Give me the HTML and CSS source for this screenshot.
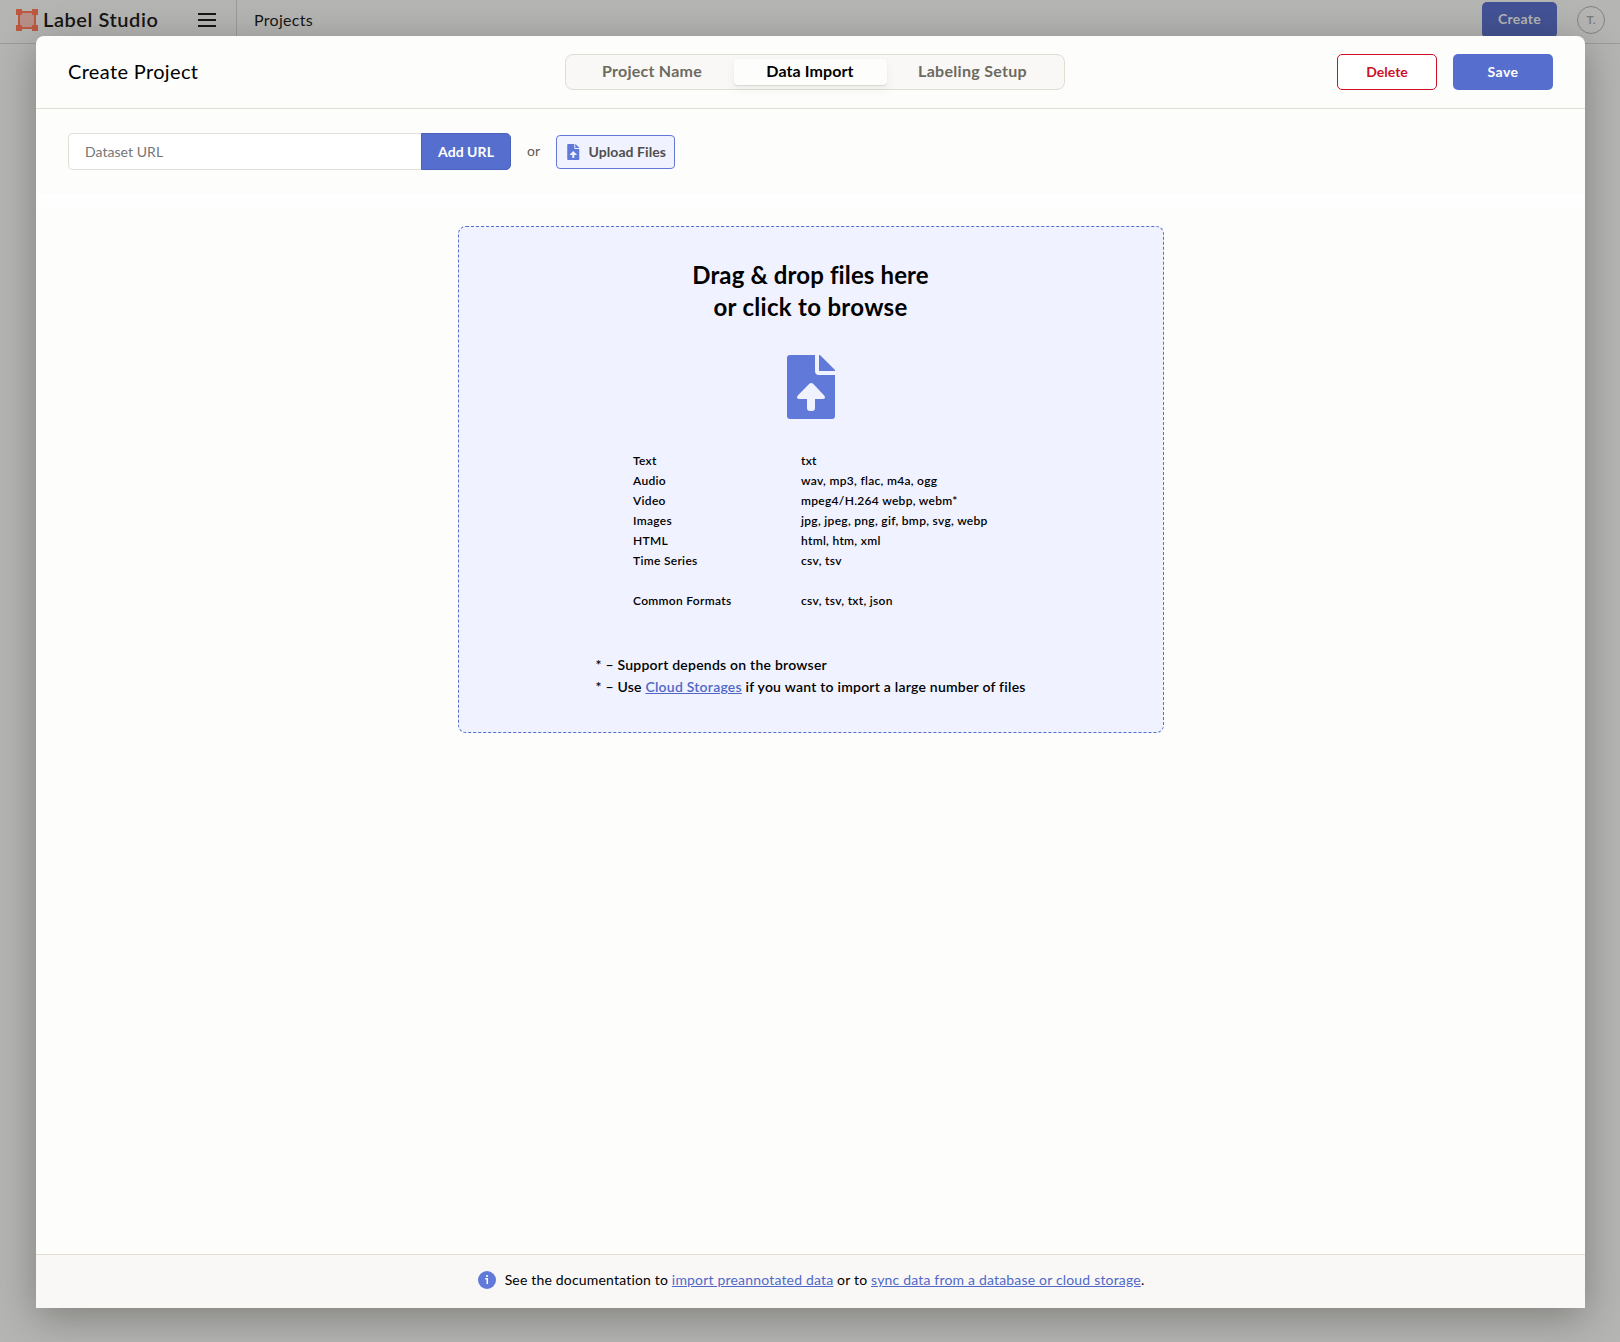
FILE: index.html
```
<!DOCTYPE html>
<html lang="en">
<head>
    <meta charset="utf-8">
    <title>Label Studio</title>
    <link rel="stylesheet" href="styles.css">
</head>
<body>
    <header class="menu-header">
        <div class="menu-left">
            <svg class="logo-icon" width="22" height="22" viewBox="0 0 22 22">
                <rect x="3" y="3" width="16" height="16" fill="#b79088"/>
                <path d="M3 3h16v16H3z" fill="none" stroke="#bd5841" stroke-width="2"/>
                <path d="M0 0h6v6H0zM16 0h6v6h-6zM0 16h6v6H0zM16 16h6v6h-6z" fill="#bd5841"/>
            </svg>
            <span class="logo-text">Label Studio</span>
            <div class="hamburger"><i></i><i></i><i></i></div>
        </div>
        <div class="breadcrumbs">Projects</div>
        <button class="button primary create">Create</button>
        <div class="userpic">T.</div>
    </header>

    <div class="overlay">
        <div class="modal">
            <div class="modal-header">
                <h1 class="modal-title">Create Project</h1>
                <ul class="tabs">
                    <li class="tab tab-name">Project Name</li>
                    <li class="tab active">Data Import</li>
                    <li class="tab tab-setup">Labeling Setup</li>
                </ul>
                <div class="actions">
                    <button class="button danger">Delete</button>
                    <button class="button primary save">Save</button>
                </div>
            </div>

            <div class="import-bar">
                <form class="url-form">
                    <input class="url-input" type="text" placeholder="Dataset URL">
                    <button class="url-button" type="button">Add URL</button>
                </form>
                <span class="or">or</span>
                <button class="upload-button">
                    <svg width="12.5" height="16" viewBox="0 0 48 64">
                        <path d="M3 0h25v16q0 4 4 4h16v41q0 3-3 3H3q-3 0-3-3V3q0-3 3-3z" fill="#617ada"/>
                        <path d="M32 0h1l15 15v1H32z" fill="#617ada"/>
                        <path d="M24 28L38 42v2H28v12h-8V44H10v-2z" fill="#f0f2ff"/>
                    </svg>
                    <span>Upload Files</span>
                </button>
            </div>

            <div class="import-body">
                <div class="dropzone">
                    <h2 class="dropzone-title">Drag &amp; drop files here<br><span class="browse">or click to browse</span></h2>
                    <svg class="file-icon" width="48" height="64" viewBox="0 0 48 64">
                        <path d="M3 0h25v16q0 4 4 4h16v41q0 3-3 3H3q-3 0-3-3V3q0-3 3-3z" fill="#617ada"/>
                        <path d="M32 0h1l15 15v1H32z" fill="#617ada"/>
                        <path d="M22.3 28.8q1.9-1.6 3.8 0L37.2 40.6q2.2 3.2-1.2 3.4H28v9q0 3-3 3h-2q-3 0-3-3v-9h-8q-3.4-.2-1.2-3.4z" fill="#f0f2ff"/>
                    </svg>
                    <dl class="formats">
                        <dt>Text</dt><dd>txt</dd>
                        <dt>Audio</dt><dd>wav, mp3, flac, m4a, ogg</dd>
                        <dt>Video</dt><dd>mpeg4/H.264 webp, webm*</dd>
                        <dt>Images</dt><dd>jpg, jpeg, png, gif, bmp, svg, webp</dd>
                        <dt>HTML</dt><dd>html, htm, xml</dd>
                        <dt>Time Series</dt><dd>csv, tsv</dd>
                        <dt class="common">Common Formats</dt><dd class="common">csv, tsv, txt, json</dd>
                    </dl>
                    <div class="notes">
                        * – Support depends on the browser<br>
                        * – Use <a href="#">Cloud Storages</a> if you want to import a large number of files
                    </div>
                </div>
            </div>

            <footer class="modal-footer">
                <svg class="info-icon" width="18" height="18" viewBox="0 0 18 18">
                    <circle cx="9" cy="9" r="9" fill="#617ada"/>
                    <circle cx="9" cy="5" r="1.1" fill="#fff"/>
                    <path d="M7.3 7.8h2v5.2" fill="none" stroke="#fff" stroke-width="1.5"/>
                </svg>
                <span>See the documentation to <a href="#">import preannotated data</a> or to <a href="#">sync data from a database or cloud storage</a>.</span>
            </footer>
        </div>
    </div>
</body>
</html>
```
FILE: styles.css
```
* {
    box-sizing: border-box;
}
body {
    margin: 0;
    height: 1342px;
    overflow: hidden;
    background: #b5b5b4;
    color: #000;
    font-family: Lato, "Liberation Sans", sans-serif;
    font-size: 14px;
    font-variant-ligatures: none;
}
h1, h2, ul, dl, dd {
    margin: 0;
    padding: 0;
}
button, input {
    font-family: inherit;
    font-size: 14px;
}
a {
    color: #5069c9;
    text-decoration: underline;
}

/* top menu */
.menu-header {
    display: flex;
    align-items: center;
    height: 44px;
    padding: 0 15px 4px 16px;
    border-bottom: 1px solid #9c9c97;
}
.menu-left {
    display: flex;
    align-items: center;
    align-self: stretch;
    width: 221px;
    margin-bottom: -4px;
    padding-bottom: 4px;
    border-right: 1px solid #9c9c97;
}
.logo-icon {
    margin-top: 1px;
}
.logo-text {
    width: 155px;
    padding: 0 0 1px 5px;
    font-size: 20px;
    font-weight: 600;
    letter-spacing: 0.55px;
    color: #151513;
}
.hamburger {
    display: flex;
    flex-direction: column;
    gap: 4px;
    margin-left: 5px;
}
.hamburger i {
    width: 18px;
    height: 2px;
    background: #151513;
}
.breadcrumbs {
    flex: 1;
    padding: 0 0 1px 17px;
    font-size: 16px;
    letter-spacing: 0.3px;
    color: #151513;
}
.userpic {
    width: 28px;
    height: 28px;
    margin-left: 20px;
    border: 1px solid #85857d;
    border-radius: 50%;
    font-size: 12px;
    font-weight: 600;
    line-height: 26px;
    text-align: center;
    color: #7b7b74;
}
.button {
    width: 100px;
    height: 36px;
    padding: 0 0 2px;
    border: 1px solid transparent;
    border-radius: 5px;
    font-weight: 700;
}
.primary {
    background: #566fcf;
    color: #fff;
}
.create {
    width: 75px;
    background: #435295;
    color: #b5b5b4;
    letter-spacing: 0.3px;
}
.save {
    letter-spacing: 0.5px;
}
.danger {
    border-color: #cc1127;
    background: #fff;
    color: #cc1127;
}

/* modal */
.overlay {
    position: absolute;
    inset: 0;
    padding: 36px 35px 34px 36px;
}
.modal {
    display: flex;
    flex-direction: column;
    height: 1272px;
    border-radius: 8px 8px 0 0;
    background: #fdfdfc;
    box-shadow: 0 9px 40px rgba(30, 30, 20, 0.36);
}
.modal-header {
    display: grid;
    grid-template-columns: 1fr 500px 1fr;
    align-items: center;
    height: 73px;
    padding: 0 32px;
    border-bottom: 1px solid #dedfd5;
}
.modal-title {
    padding-bottom: 2px;
    font-size: 20px;
    font-weight: 400;
    letter-spacing: 0.35px;
}
.tabs {
    display: flex;
    width: 500px;
    height: 36px;
    margin-left: 4px;
    padding: 4px 5px;
    border: 1px solid #dfded2;
    border-radius: 8px;
    background: #f9f8f7;
    list-style: none;
}
.tab {
    flex: none;
    width: 153px;
    height: 26px;
    border-radius: 4px;
    font-size: 16px;
    font-weight: 700;
    line-height: 24px;
    text-align: center;
    letter-spacing: 0.1px;
    color: #6c6b60;
}
.tab-name {
    width: 163px;
    letter-spacing: 0.25px;
}
.tab-setup {
    width: 172px;
    letter-spacing: 0.3px;
}
.tab.active {
    background: #fdfdfc;
    color: #000;
    box-shadow: 0 1px 1px rgba(90, 85, 60, 0.15), 0 5px 10px rgba(90, 85, 60, 0.07);
}
.actions {
    display: flex;
    justify-content: flex-end;
    gap: 16px;
}

/* url and upload row */
.import-bar {
    display: flex;
    align-items: center;
    height: 85px;
    padding: 0 32px 0 32px;
}
.url-form {
    display: flex;
    width: 443px;
    height: 37px;
}
.url-input {
    flex: 1;
    padding: 0 16px 1px;
    border: 1px solid #dedfd9;
    border-right: 0;
    border-radius: 5px 0 0 5px;
    background: #fff;
    letter-spacing: 0.05px;
}
.url-input::placeholder {
    color: #757575;
}
.url-button {
    width: 90px;
    padding: 0 0 1px;
    border: 1px solid #4a62bd;
    border-radius: 0 5px 5px 0;
    background: #566fcf;
    color: #fff;
    font-weight: 700;
    letter-spacing: 0.06px;
}
.or {
    width: 45px;
    padding-bottom: 2px;
    text-align: center;
    color: #5c5b52;
}
.upload-button {
    display: flex;
    align-items: center;
    gap: 9px;
    width: 119px;
    height: 34px;
    padding: 0 0 0 10px;
    border: 1px solid #617ada;
    border-radius: 4px;
    background: #f0f2ff;
    color: #4f4f4d;
    font-weight: 700;
    letter-spacing: 0.07px;
    white-space: nowrap;
}
.upload-button span {
    padding-bottom: 1px;
}

/* drop area */
.import-body {
    flex: 1;
    padding-top: 32px;
    background: linear-gradient(#fff, #fdfdfc 24px);
}
.dropzone {
    display: flex;
    flex-direction: column;
    align-items: center;
    width: 706px;
    height: 507px;
    margin: 0 auto;
    padding-top: 32px;
    border: 1px dashed #566fcf;
    border-radius: 8px;
    background: #f0f2ff;
}
.dropzone-title {
    font-size: 24px;
    font-weight: 700;
    line-height: 32px;
    text-align: center;
    letter-spacing: 0.12px;
}
.browse {
    letter-spacing: 0.3px;
}
.file-icon {
    margin-top: 32px;
}
.formats {
    display: grid;
    grid-template-columns: 168px 187px;
    margin-top: 32px;
    font-size: 12px;
    font-weight: 600;
    line-height: 20px;
    letter-spacing: 0.3px;
    white-space: nowrap;
}
.common {
    margin-top: 20px;
}
.notes {
    width: 430px;
    margin-top: 43px;
    font-weight: 600;
    line-height: 22px;
    letter-spacing: 0.23px;
    white-space: nowrap;
}

.modal-footer {
    display: flex;
    align-items: center;
    justify-content: center;
    gap: 9px;
    height: 54px;
    padding: 0 0 3px 1px;
    border-top: 1px solid #e4ded2;
    background: #f9f8f7;
    letter-spacing: 0.18px;
}
.modal-footer span {
    padding-bottom: 1px;
}
```
